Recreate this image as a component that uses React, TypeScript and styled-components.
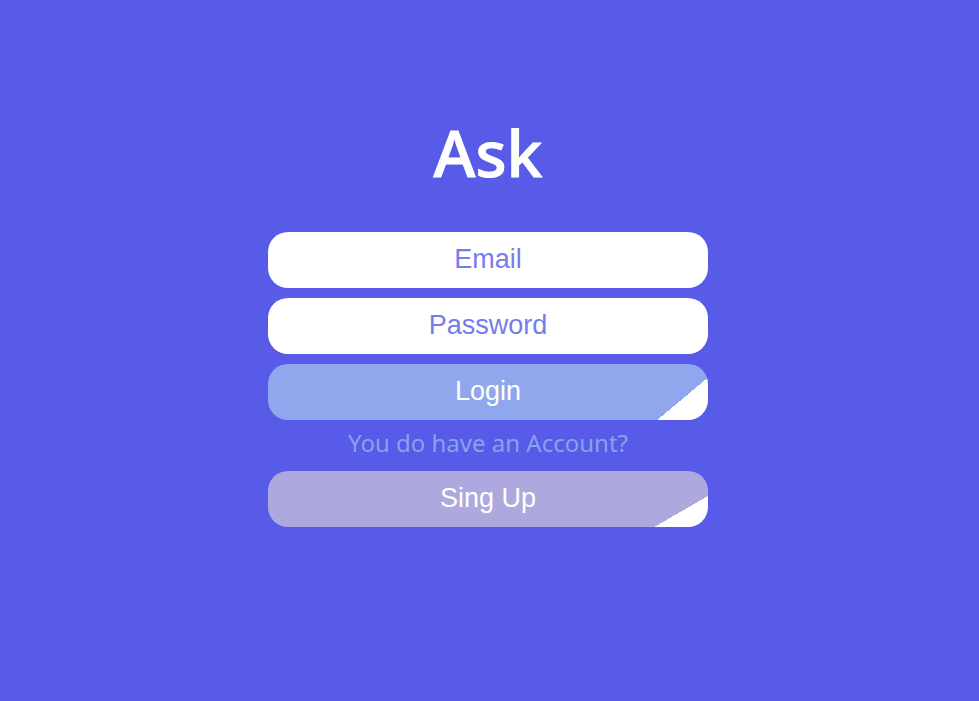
import React from "react";
import styled, { createGlobalStyle } from "styled-components";

const GlobalStyle = createGlobalStyle`
  * { box-sizing: border-box; }
  body {
    margin: 0;
    background: #575be7;
    font-family: "Noto Sans", sans-serif;
  }
`;

const Page = styled.main`
  min-height: 100vh;
  padding: 103px 19px 32px 16px;
  display: flex;
  flex-direction: column;
  align-items: center;
`;

const Title = styled.h1`
  margin: 0 0 29px;
  color: #fff;
  font-size: 64px;
  font-weight: 500;
  line-height: 100px;
  -webkit-text-stroke: 1px #fff;
`;

const Form = styled.form`
  width: 100%;
  max-width: 440px;
  display: flex;
  flex-direction: column;
`;

const Field = styled.input`
  width: 100%;
  height: 56px;
  margin: 0 0 10px;
  padding: 0 20px 2px;
  border: 0;
  border-radius: 20px;
  background: #fff;
  color: #777bec;
  font-family: "Liberation Sans", Arial, sans-serif;
  font-size: 27px;
  text-align: center;
  outline: none;
  &::placeholder { color: #777bec; opacity: 1; }
`;

const Action = styled.button<{ $color: string; $angle: number }>`
  width: 100%;
  height: 56px;
  padding: 0 20px 2px;
  border: 0;
  border-radius: 20px;
  background: linear-gradient(${(p) => p.$angle}deg, ${(p) => p.$color} 90%, #fff 90%);
  color: #fff;
  font-family: "Liberation Sans", Arial, sans-serif;
  font-size: 27px;
  text-align: center;
  cursor: pointer;
`;

const Prompt = styled.p`
  margin: 5px 0 10px;
  color: #87a3ec;
  font-size: 24px;
  line-height: 36px;
  text-align: center;
`;

export default function App() {
  return (
    <>
      <GlobalStyle />
      <Page>
        <Title>Ask</Title>
        <Form onSubmit={(e) => e.preventDefault()}>
          <Field type="email" placeholder="Email" aria-label="Email" />
          <Field type="password" placeholder="Password" aria-label="Password" />
          <Action type="submit" $color="#90a7ee" $angle={140}>Login</Action>
          <Prompt>You do have an Account?</Prompt>
          <Action type="button" $color="#ada8de" $angle={150}>Sing Up</Action>
        </Form>
      </Page>
    </>
  );
}
